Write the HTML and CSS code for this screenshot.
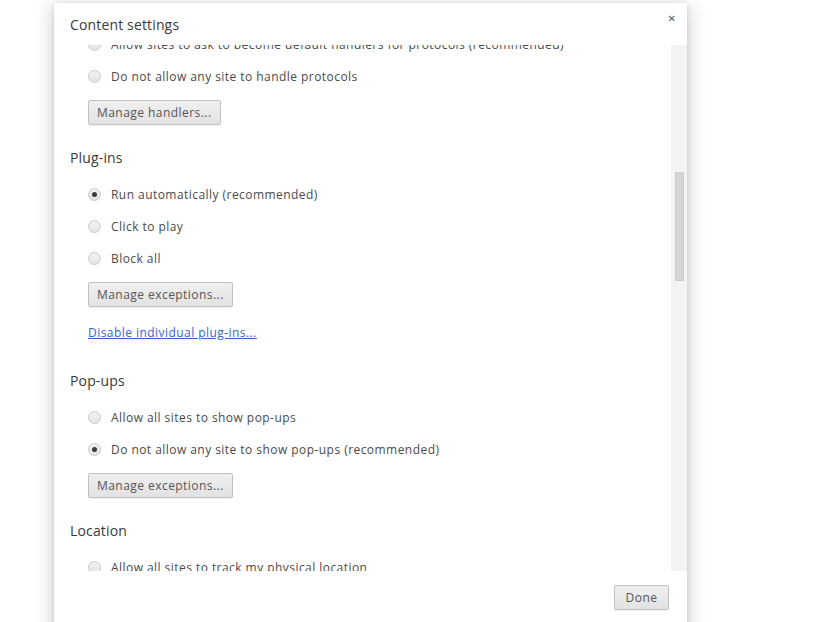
FILE: index.html
```html
<!DOCTYPE html>
<html>
<head>
<meta charset="utf-8">
<link rel="stylesheet" href="styles.css">
</head>
<body>
<div class="page">
  <div class="dialog">
    <div class="dialog-header">
      <h1 class="dialog-title">Content settings</h1>
      <span class="close-btn">&#x2715;</span>
    </div>
    <div class="dialog-body">
      <div class="scroll-area">
        <div class="scroll-content">
          <section class="group first">
            <label class="radio-row"><span class="radio"></span><span>Allow sites to ask to become default handlers for protocols (recommended)</span></label>
            <label class="radio-row"><span class="radio"></span><span>Do not allow any site to handle protocols</span></label>
            <div class="btn-row"><button class="btn">Manage handlers...</button></div>
          </section>
          <section class="group">
            <h2 class="group-title">Plug-ins</h2>
            <label class="radio-row"><span class="radio checked"></span><span>Run automatically (recommended)</span></label>
            <label class="radio-row"><span class="radio"></span><span>Click to play</span></label>
            <label class="radio-row"><span class="radio"></span><span>Block all</span></label>
            <div class="btn-row"><button class="btn">Manage exceptions...</button></div>
            <div class="link-row"><a class="link" href="#">Disable individual plug-ins...</a></div>
          </section>
          <section class="group after-link">
            <h2 class="group-title">Pop-ups</h2>
            <label class="radio-row"><span class="radio"></span><span>Allow all sites to show pop-ups</span></label>
            <label class="radio-row"><span class="radio checked"></span><span>Do not allow any site to show pop-ups (recommended)</span></label>
            <div class="btn-row"><button class="btn">Manage exceptions...</button></div>
          </section>
          <section class="group">
            <h2 class="group-title">Location</h2>
            <label class="radio-row"><span class="radio"></span><span>Allow all sites to track my physical location</span></label>
          </section>
        </div>
      </div>
      <div class="scrollbar"><div class="scroll-thumb"></div></div>
    </div>
    <div class="dialog-footer">
      <button class="btn done-btn">Done</button>
    </div>
  </div>
</div>
</body>
</html>
```
FILE: styles.css
```css
html, body {
  margin: 0;
  padding: 0;
  background: #ffffff;
  overflow: hidden;
}
body {
  font-family: "Open Sans", "Noto Sans", sans-serif;
  font-size: 12px;
  letter-spacing: 0.45px;
  color: #4a4a4a;
}
.page {
  padding-top: 3px;
  padding-left: 54px;
}
.dialog {
  width: 633px;
  height: 650px;
  background: #fff;
  box-shadow: 0 4px 18px 2px rgba(0,0,0,0.18), 0 1px 4px rgba(0,0,0,0.12);
  display: flex;
  flex-direction: column;
}
.dialog-header {
  height: 42px;
  box-sizing: border-box;
  padding: 12px 11px 0 16px;
  display: flex;
  justify-content: space-between;
  align-items: flex-start;
}
.dialog-title {
  margin: 0;
  font-size: 14px;
  letter-spacing: 0.15px;
  font-weight: normal;
  line-height: 20px;
  color: #3a3a3a;
}
.close-btn {
  font-size: 10px;
  line-height: 10px;
  color: #555;
  font-weight: bold;
  margin-top: -1px;
  letter-spacing: 0;
  font-family: "DejaVu Sans", sans-serif;
}
.dialog-body {
  height: 526px;
  display: flex;
}
.scroll-area {
  flex: 1;
  overflow: hidden;
}
.scroll-content {
  margin-top: -17px;
  padding-left: 16px;
}
.group {
  margin-top: 23px;
}
.group.first {
  margin-top: 0;
}
.group.after-link {
  margin-top: 28px;
}
.group-title {
  margin: 0 0 10px 0;
  font-size: 14px;
  letter-spacing: 0.15px;
  font-weight: normal;
  line-height: 20px;
  color: #3a3a3a;
}
.radio-row {
  height: 32px;
  display: flex;
  align-items: center;
  gap: 10px;
  padding-left: 18px;
  white-space: nowrap;
}
.radio {
  width: 11px;
  height: 11px;
  border-radius: 50%;
  border: 1px solid #c9c9c9;
  background: linear-gradient(#f2f2f2, #e4e4e4);
  display: flex;
  align-items: center;
  justify-content: center;
  flex: none;
}
.radio.checked::after {
  content: "";
  width: 5px;
  height: 5px;
  border-radius: 50%;
  background: #3a3a3a;
}
.btn-row {
  margin-top: 8px;
  padding-left: 18px;
  display: flex;
}
.btn {
  height: 25px;
  padding: 0 8px;
  font-family: inherit;
  font-size: 12px;
  letter-spacing: 0.45px;
  color: #555;
  background: linear-gradient(#f0f0f0, #e2e2e2);
  border: 1px solid #c2c2c2;
  border-radius: 2px;
  box-shadow: 0 1px 0 rgba(0,0,0,0.05);
}
.link-row {
  margin-top: 16px;
  padding-left: 18px;
  line-height: 20px;
}
.link {
  color: #3465d0;
}
.scrollbar {
  width: 16px;
  background: #f3f3f3;
  padding-top: 127px;
  box-sizing: border-box;
  display: flex;
  justify-content: center;
}
.scroll-thumb {
  width: 9px;
  height: 109px;
  background: #d6d6d6;
  border: 1px solid #cbcbcb;
  box-sizing: border-box;
  border-radius: 1px;
}
.dialog-footer {
  display: flex;
  justify-content: flex-end;
  padding: 14px 18px 0 0;
}
.done-btn {
  width: 55px;
  padding: 0;
}
```
